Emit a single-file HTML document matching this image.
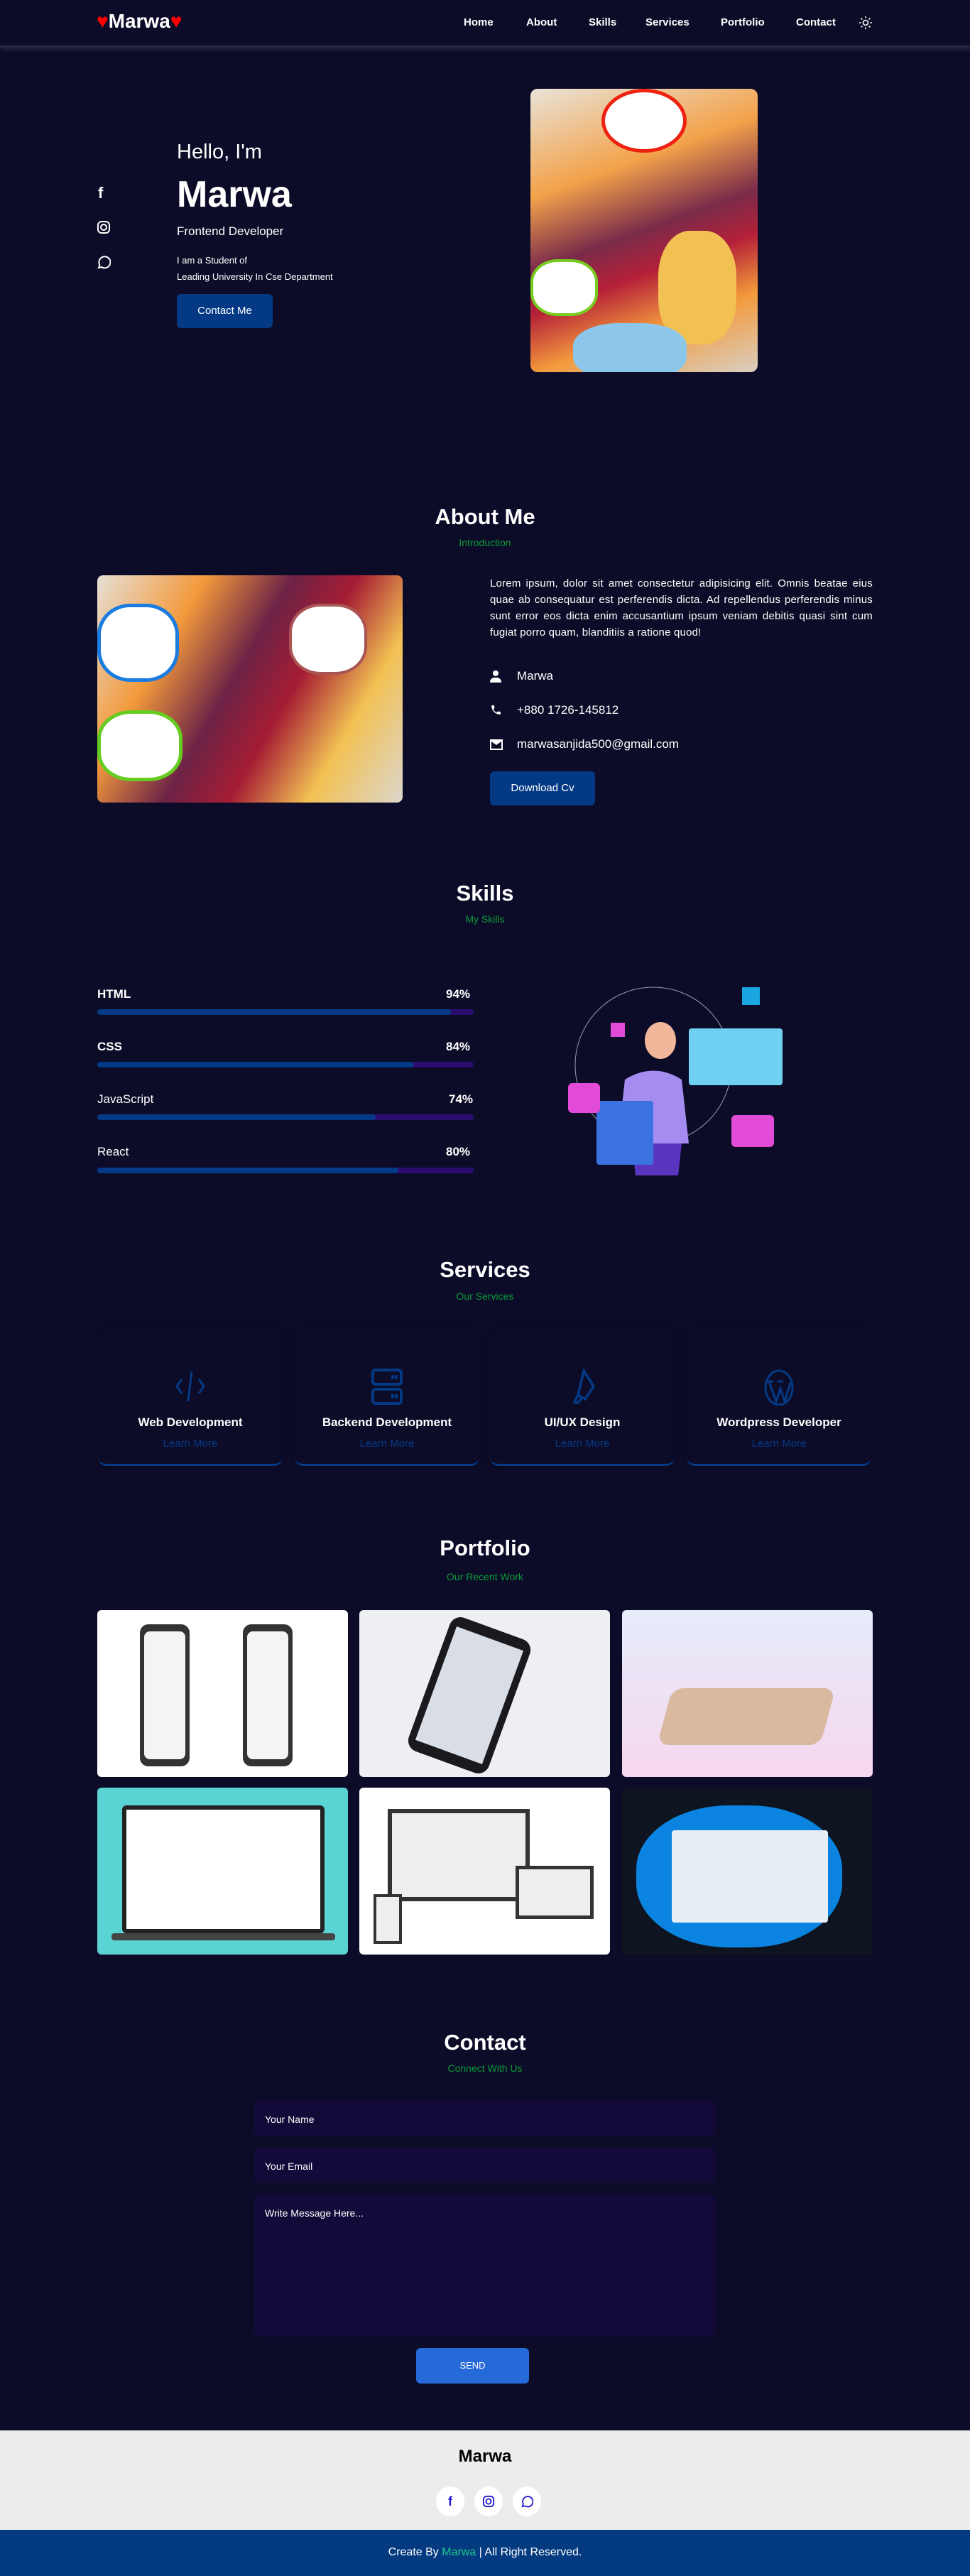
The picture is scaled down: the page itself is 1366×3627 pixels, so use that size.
<!DOCTYPE html>
<html><head><meta charset="utf-8"><style>
*{box-sizing:border-box;margin:0;padding:0}
body{width:1366px;height:3627px;background:#0d0c28;font-family:"Liberation Sans",sans-serif;color:#fff;position:relative;overflow:hidden}
.a{position:absolute}
.nav{left:0;top:0;width:1366px;height:66px;border-bottom:2px solid #2a2a3e;box-shadow:0 3px 6px rgba(120,120,140,.3)}
.nl{font-size:15px;top:23px;font-weight:bold}
h2{position:absolute;left:0;width:1366px;text-align:center;font-size:31px;font-weight:bold}
.sub{position:absolute;left:0;width:1366px;text-align:center;font-size:14px;color:#0a9a36}
.lbl{font-size:17px;font-weight:bold}
.track{left:137px;width:530px;height:8px;border-radius:4px;background:#2a0d6e}
.fill{height:8px;border-radius:4px;background:#043a85}
.card{width:260px;height:195px;border-radius:12px;border-bottom:3px solid #043a85;background:#0d0c28;box-shadow:0 0 6px rgba(0,0,0,.4)}
.card .t{position:absolute;top:124px;width:100%;text-align:center;font-weight:bold;font-size:17px}
.card .l{position:absolute;top:155px;width:100%;text-align:center;color:#043a85;font-size:15px}
.card svg{position:absolute;left:108px;top:58px}
.pf{width:353px;height:235px;border-radius:6px;overflow:hidden}
.inp{left:358px;width:649px;background:#130a39;border-radius:6px;font-size:14px;padding:18px 15px}
.fi{top:3501px;width:40px;height:42px;border-radius:50%;background:#fff}
</style></head><body>
<div class="a nav"></div>
<div class="a" style="left:136px;top:14px;font-size:28px;font-weight:bold"><span style="color:#f00">♥</span>Marwa<span style="color:#f00">♥</span></div>
<div class="a nl" style="left:653px">Home</div>
<div class="a nl" style="left:741px">About</div>
<div class="a nl" style="left:829px">Skills</div>
<div class="a nl" style="left:909px">Services</div>
<div class="a nl" style="left:1015px">Portfolio</div>
<div class="a nl" style="left:1121px">Contact</div>
<svg class="a" style="left:1210px;top:23px" width="18" height="18" viewBox="0 0 18 18" fill="none" stroke="#fff" stroke-width="1.6"><circle cx="9" cy="9" r="3.5"/><path d="M9 0v2.5M9 15.5V18M0 9h2.5M15.5 9H18M2.6 2.6l1.8 1.8M13.6 13.6l1.8 1.8M2.6 15.4l1.8-1.8M13.6 4.4l1.8-1.8"/></svg>

<div class="a" style="left:138px;top:259px;font-size:22px;font-weight:bold">f</div>
<svg class="a" style="left:136px;top:310px" width="20" height="20" viewBox="0 0 20 20" fill="none" stroke="#fff" stroke-width="2"><rect x="2" y="2" width="16" height="16" rx="5"/><circle cx="10" cy="10" r="4"/></svg>
<svg class="a" style="left:136px;top:359px" width="20" height="20" viewBox="0 0 20 20" fill="none" stroke="#fff" stroke-width="2"><path d="M3 18l1.3-4A8 8 0 1 1 7 17z"/></svg>

<div class="a" style="left:249px;top:198px;font-size:29px">Hello, I'm</div>
<div class="a" style="left:249px;top:244px;font-size:52px;font-weight:bold">Marwa</div>
<div class="a" style="left:249px;top:316px;font-size:17px">Frontend Developer</div>
<div class="a" style="left:249px;top:355px;font-size:13px;line-height:23px">I am a Student of<br>Leading University In Cse Department</div>
<div class="a" style="left:249px;top:414px;width:135px;height:48px;background:#043a85;border-radius:6px;text-align:center;line-height:48px;font-size:15px">Contact Me</div>

<div class="a" style="left:747px;top:125px;width:320px;height:399px;border-radius:10px;overflow:hidden;background:linear-gradient(160deg,#e9e3d8 0%,#f3a24a 30%,#7a2b4a 50%,#b52038 62%,#f39a3c 78%,#d9cfc2 100%)">
<div class="a" style="left:100px;top:0;width:120px;height:90px;border-radius:50%;background:#fff;border:5px solid #e21"></div>
<div class="a" style="left:0;top:240px;width:95px;height:80px;border-radius:40%;background:#fff;border:4px solid #7c2"></div>
<div class="a" style="left:180px;top:200px;width:110px;height:160px;border-radius:40%;background:#f2c153"></div>
<div class="a" style="left:60px;top:330px;width:160px;height:80px;border-radius:40%;background:#8cc6ea"></div>
</div>

<h2 style="top:710px">About Me</h2>
<div class="sub" style="top:756px">Introduction</div>
<div class="a" style="left:137px;top:810px;width:430px;height:320px;border-radius:8px;overflow:hidden;background:linear-gradient(120deg,#e6e0d6 0%,#f39a3c 25%,#6d2346 45%,#a51c33 60%,#f2c153 78%,#dcd6cc 100%)">
<div class="a" style="left:0;top:40px;width:115px;height:110px;border-radius:40%;background:#fff;border:5px solid #1a7ce0"></div>
<div class="a" style="left:0;top:190px;width:120px;height:100px;border-radius:40%;background:#fff;border:5px solid #6c2"></div>
<div class="a" style="left:270px;top:40px;width:110px;height:100px;border-radius:40%;background:#fff;border:4px solid #a55"></div>
</div>
<div class="a" style="left:690px;top:810px;width:539px;font-size:15px;letter-spacing:.2px;line-height:23px;text-align:justify">Lorem ipsum, dolor sit amet consectetur adipisicing elit. Omnis beatae eius quae ab consequatur est perferendis dicta. Ad repellendus perferendis minus sunt error eos dicta enim accusantium ipsum veniam debitis quasi sint cum fugiat porro quam, blanditiis a ratione quod!</div>
<svg class="a" style="left:690px;top:943px" width="16" height="18" viewBox="0 0 16 18" fill="#fff"><circle cx="8" cy="5" r="4"/><path d="M0 18c0-5 3-7 8-7s8 2 8 7z"/></svg>
<div class="a" style="left:728px;top:942px;font-size:17px">Marwa</div>
<svg class="a" style="left:690px;top:991px" width="17" height="17" viewBox="0 0 24 24" fill="#fff"><path d="M6.6 10.8a15 15 0 0 0 6.6 6.6l2.2-2.2c.3-.3.7-.4 1-.2 1.1.4 2.3.6 3.6.6.6 0 1 .4 1 1V20c0 .6-.4 1-1 1A17 17 0 0 1 3 4c0-.6.4-1 1-1h3.5c.6 0 1 .4 1 1 0 1.3.2 2.5.6 3.6.1.3 0 .7-.2 1z"/></svg>
<div class="a" style="left:728px;top:990px;font-size:17px">+880 1726-145812</div>
<svg class="a" style="left:690px;top:1041px" width="18" height="15" viewBox="0 0 18 15" fill="#fff"><path d="M0 0h18v15H0z M2 3v10h14V3L9 8z" fill-rule="evenodd"/></svg>
<div class="a" style="left:728px;top:1038px;font-size:17px">marwasanjida500@gmail.com</div>
<div class="a" style="left:690px;top:1086px;width:148px;height:48px;background:#043a85;border-radius:6px;text-align:center;line-height:48px;font-size:15px">Download Cv</div>

<h2 style="top:1240px">Skills</h2>
<div class="sub" style="top:1286px">My Skills</div>
<div class="a lbl" style="left:137px;top:1390px">HTML</div><div class="a lbl" style="left:628px;top:1390px">94%</div>
<div class="a track" style="top:1421px"><div class="fill" style="width:94%"></div></div>
<div class="a lbl" style="left:137px;top:1464px">CSS</div><div class="a lbl" style="left:628px;top:1464px">84%</div>
<div class="a track" style="top:1495px"><div class="fill" style="width:84%"></div></div>
<div class="a lbl" style="left:137px;top:1538px;font-weight:normal">JavaScript</div><div class="a lbl" style="left:632px;top:1538px">74%</div>
<div class="a track" style="top:1569px"><div class="fill" style="width:74%"></div></div>
<div class="a lbl" style="left:137px;top:1612px;font-weight:normal">React</div><div class="a lbl" style="left:628px;top:1612px">80%</div>
<div class="a track" style="top:1644px"><div class="fill" style="width:80%"></div></div>
<svg class="a" style="left:770px;top:1380px" width="345" height="275" viewBox="0 0 345 275">
<circle cx="150" cy="120" r="110" fill="none" stroke="#99a" stroke-width="1"/>
<rect x="200" y="68" width="132" height="80" rx="4" fill="#6fd0f2"/>
<rect x="140" y="60" width="40" height="45" rx="18" fill="#3060b8"/>
<ellipse cx="160" cy="85" rx="22" ry="26" fill="#f2b79b"/>
<path d="M110 140q40-25 80 0l10 90h-100z" fill="#a48cf0"/>
<path d="M120 230h70l-5 45h-60z" fill="#5a35c0"/>
<rect x="70" y="170" width="80" height="90" rx="4" fill="#3a72e0"/>
<rect x="30" y="145" width="45" height="42" rx="6" fill="#e24ad8"/>
<rect x="260" y="190" width="60" height="45" rx="6" fill="#e24ad8"/>
<rect x="275" y="10" width="25" height="25" fill="#1aa6e0"/>
<rect x="90" y="60" width="20" height="20" fill="#e24ad8"/>
</svg>

<h2 style="top:1770px">Services</h2>
<div class="sub" style="top:1817px">Our Services</div>
<div class="a card" style="left:138px;top:1869px"><svg width="44" height="50" viewBox="0 0 44 50" fill="none" stroke="#043a85" stroke-width="3"><path d="M10 15l-7 10 7 10M34 15l7 10-7 10M24 4l-5 42"/></svg><div class="t">Web Development</div><div class="l">Learn More</div></div>
<div class="a card" style="left:415px;top:1869px"><svg width="44" height="52" viewBox="0 0 44 52" fill="none" stroke="#043a85" stroke-width="4"><rect x="2" y="2" width="40" height="20" rx="4"/><rect x="2" y="29" width="40" height="20" rx="4"/><path d="M30 9v6M35 9v6M30 36v6M35 36v6"/></svg><div class="t">Backend Development</div><div class="l">Learn More</div></div>
<div class="a card" style="left:690px;top:1869px"><svg width="44" height="52" viewBox="0 0 44 52" fill="none" stroke="#043a85" stroke-width="3.5"><path d="M24 3l14 22-12 18-10-6z M16 37l-5 10q4 3 7-1l3-6"/></svg><div class="t">UI/UX Design</div><div class="l">Learn More</div></div>
<div class="a card" style="left:967px;top:1869px"><svg width="44" height="52" viewBox="0 0 44 52" fill="none" stroke="#043a85" stroke-width="3"><ellipse cx="22" cy="27" rx="19" ry="24"/><path d="M8 18l10 28 6-18 6 18 8-26M6 18h8M20 18h8"/></svg><div class="t">Wordpress Developer</div><div class="l">Learn More</div></div>

<h2 style="top:2162px">Portfolio</h2>
<div class="sub" style="top:2212px">Our Recent Work</div>
<div class="a pf" style="left:137px;top:2267px;background:#fff"><div class="a" style="left:60px;top:20px;width:70px;height:200px;border-radius:12px;background:#333"></div><div class="a" style="left:205px;top:20px;width:70px;height:200px;border-radius:12px;background:#333"></div><div class="a" style="left:66px;top:30px;width:58px;height:180px;border-radius:8px;background:#f4f4f4"></div><div class="a" style="left:211px;top:30px;width:58px;height:180px;border-radius:8px;background:#f4f4f4"></div></div>
<div class="a pf" style="left:506px;top:2267px;background:#eeeff2"><div class="a" style="left:95px;top:20px;width:120px;height:200px;border-radius:16px;background:#1a1a1e;transform:rotate(20deg)"></div><div class="a" style="left:105px;top:35px;width:100px;height:170px;background:#d9dde6;transform:rotate(20deg)"></div></div>
<div class="a pf" style="left:876px;top:2267px;background:linear-gradient(180deg,#e6ecfa,#f6d7ef)"><div class="a" style="left:60px;top:110px;width:230px;height:80px;border-radius:16px;background:#d9b9a0;transform:skewX(-15deg)"></div></div>
<div class="a pf" style="left:137px;top:2517px;background:#5ad3d4"><div class="a" style="left:35px;top:25px;width:285px;height:180px;background:#fff;border:6px solid #222;border-radius:6px"></div><div class="a" style="left:20px;top:205px;width:315px;height:10px;background:#444;border-radius:4px"></div></div>
<div class="a pf" style="left:506px;top:2517px;background:#fff"><div class="a" style="left:40px;top:30px;width:200px;height:130px;background:#eee;border:6px solid #333"></div><div class="a" style="left:220px;top:110px;width:110px;height:75px;background:#eee;border:5px solid #333"></div><div class="a" style="left:20px;top:150px;width:40px;height:70px;background:#eee;border:4px solid #333"></div></div>
<div class="a pf" style="left:876px;top:2517px;background:#0e1520"><div class="a" style="left:20px;top:25px;width:290px;height:200px;border-radius:45%;background:#0a84e0"></div><div class="a" style="left:70px;top:60px;width:220px;height:130px;background:#e8eef6;border-radius:4px"></div></div>

<h2 style="top:2858px">Contact</h2>
<div class="sub" style="top:2904px">Connect With Us</div>
<div class="a inp" style="top:2958px;height:50px">Your Name</div>
<div class="a inp" style="top:3024px;height:50px">Your Email</div>
<div class="a inp" style="top:3090px;height:200px">Write Message Here...</div>
<div class="a" style="left:586px;top:3306px;width:159px;height:50px;background:#256ad8;border-radius:6px;text-align:center;line-height:50px;font-size:13px">SEND</div>

<div class="a" style="left:0;top:3422px;width:1366px;height:140px;background:#ececec"></div>
<div class="a" style="left:0;top:3445px;width:1366px;text-align:center;color:#000;font-size:24px;font-weight:bold">Marwa</div>
<div class="a fi" style="left:614px;text-align:center;line-height:42px;color:#2018c8;font-weight:bold;font-size:18px">f</div>
<div class="a fi" style="left:668px"><svg style="margin:12px 11px" width="18" height="18" viewBox="0 0 20 20" fill="none" stroke="#2018c8" stroke-width="2"><rect x="2" y="2" width="16" height="16" rx="5"/><circle cx="10" cy="10" r="4"/></svg></div>
<div class="a fi" style="left:722px"><svg style="margin:12px 11px" width="18" height="18" viewBox="0 0 20 20" fill="none" stroke="#2018c8" stroke-width="2"><path d="M3 18l1.3-4A8 8 0 1 1 7 17z"/></svg></div>
<div class="a" style="left:0;top:3562px;width:1366px;height:65px;background:#043a80"></div>
<div class="a" style="left:0;top:3585px;width:1366px;text-align:center;font-size:16px">Create By <span style="color:#1ec98a">Marwa</span> | All Right Reserved.</div>
</body></html>
